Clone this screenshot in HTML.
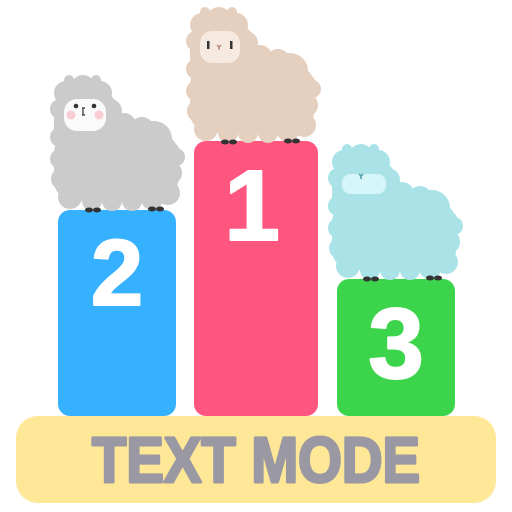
<!DOCTYPE html>
<html><head><meta charset="utf-8"><style>
html,body{margin:0;padding:0;background:#fff;width:512px;height:512px;overflow:hidden}
</style></head><body>
<svg width="512" height="512" viewBox="0 0 512 512" xmlns="http://www.w3.org/2000/svg">
<defs>
<g id="body">
  <rect x="12" y="2" width="10" height="24" rx="5"/>
  <rect x="39" y="2" width="10" height="24" rx="5"/>
  <circle cx="14" cy="20" r="12"/><circle cx="31" cy="14" r="12"/><circle cx="48" cy="20" r="12"/>
  <circle cx="8" cy="36" r="10"/><circle cx="58" cy="38" r="12"/>
  <rect x="2" y="18" width="64" height="60" rx="20"/>
  <circle cx="72" cy="52" r="12"/><circle cx="90" cy="56" r="12"/><circle cx="106" cy="64" r="13"/>
  <circle cx="116" cy="80" r="12"/><circle cx="124" cy="84" r="9"/>
  <circle cx="118" cy="100" r="12"/><circle cx="116" cy="120" r="12"/>
  <circle cx="100" cy="126" r="11"/><circle cx="80" cy="128" r="10"/><circle cx="60" cy="128" r="10"/>
  <circle cx="40" cy="128" r="10"/><circle cx="18" cy="124" r="12"/>
  <circle cx="10" cy="106" r="11"/><circle cx="8" cy="86" r="10"/><circle cx="8" cy="64" r="10"/>
  <rect x="2" y="60" width="124" height="68" rx="20"/>
  <rect x="30" y="48" width="90" height="40" rx="18"/>
</g>
<g id="feet" fill="#333">
  <ellipse cx="37" cy="137" rx="4" ry="2.5"/><ellipse cx="45" cy="137" rx="4" ry="2.5"/>
  <ellipse cx="100" cy="136" rx="4" ry="2.5"/><ellipse cx="108" cy="136" rx="4" ry="2.5"/>
</g>
</defs>

<rect x="58" y="210" width="118" height="206" rx="12" fill="#36b1ff"/>
<rect x="194" y="141" width="124" height="275" rx="12" fill="#ff5680"/>
<rect x="337" y="279" width="118" height="137" rx="12" fill="#3bd44b"/>

<g fill="#fff" font-family="Liberation Sans, sans-serif" font-weight="bold" text-anchor="middle" stroke="#fff" stroke-width="2" stroke-linejoin="round">
  <text x="117" y="305" font-size="94">2</text>
  <text x="252" y="240" font-size="100">1</text>
  <text x="396" y="378" font-size="100">3</text>
</g>

<g transform="translate(188,5)">
  <use href="#body" fill="#e5cfbf"/>
  <use href="#feet"/>
  <rect x="12" y="26" width="40" height="32" rx="12" fill="#f6e9df"/>
  <rect x="19" y="36" width="2.5" height="8" fill="#333"/>
  <rect x="42" y="36" width="2.5" height="8" fill="#333"/>
  <path d="M29 40 l2 2 l2 -2 M31 42 v3" stroke="#b08070" stroke-width="1.3" fill="none"/>
</g>
<g transform="translate(52,73)">
  <use href="#body" fill="#cbcbcb"/>
  <use href="#feet"/>
  <rect x="12" y="26" width="42" height="32" rx="13" fill="#fafafa"/>
  <circle cx="24" cy="33" r="2.3" fill="#333"/><circle cx="42" cy="33" r="2.3" fill="#333"/>
  <circle cx="19" cy="42" r="4.5" fill="#f9cdd2"/><circle cx="47" cy="42" r="4.5" fill="#f9cdd2"/>
  <path d="M31 35 v7 M30 35 h3 M30 42 h3" stroke="#333" stroke-width="1.2"/>
</g>
<g transform="translate(330,142)">
  <use href="#body" fill="#a9e3e8"/>
  <use href="#feet"/>
  <rect x="12" y="32" width="44" height="20" rx="9" fill="#d6f5f8"/>
  <path d="M29 32 l2 2 l2 -2 M31 34 v3" stroke="#4a9aa3" stroke-width="1.5" fill="none"/>
</g>

<rect x="16" y="416" width="480" height="87" rx="22" fill="#fee797"/>
<text x="256" y="482" font-family="Liberation Sans, sans-serif" font-weight="bold" font-size="64" fill="#9a98a2" stroke="#9a98a2" stroke-width="3" stroke-linejoin="round" text-anchor="middle" textLength="328" lengthAdjust="spacingAndGlyphs">TEXT MODE</text>
</svg>
</body></html>
